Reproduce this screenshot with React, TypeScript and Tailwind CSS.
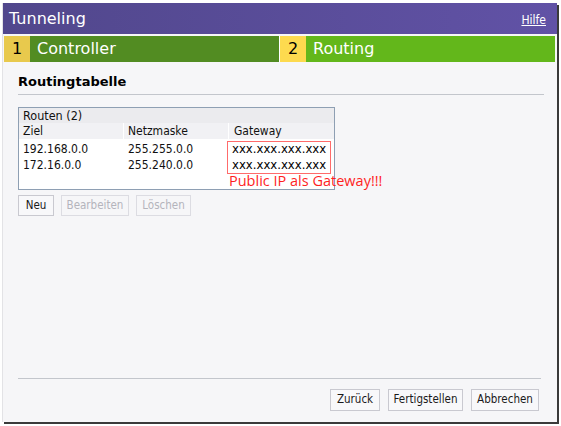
import React from 'react';

const routes = [
  { ziel: '192.168.0.0', maske: '255.255.0.0', gw: 'xxx.xxx.xxx.xxx' },
  { ziel: '172.16.0.0', maske: '255.240.0.0', gw: 'xxx.xxx.xxx.xxx' },
];

function Btn({ label, disabled, className = '' }: { label: string; disabled?: boolean; className?: string }) {
  return (
    <button
      className={`border px-[4px] text-[11.5px] leading-none ${
        disabled ? 'border-[#dcdce2] text-[#b4b4bc] bg-[#f6f6f8]' : 'border-[#c9c9d0] text-[#1a1a1a] bg-[#f8f8fa]'
      } ${className}`}
    >
      {label}
    </button>
  );
}

export default function App() {
  return (
    <div
      className="w-[561px] h-[426px] bg-white pt-[3px] pl-[2px]"
      style={{ fontFamily: '"DejaVu Sans Condensed", Tahoma, "DejaVu Sans", sans-serif' }}
    >
      <div className="w-[555px] h-[419px] bg-[#f6f6f8] border-l border-[#e3e3e6] flex flex-col shadow-[2px_2px_0_#3a3a3a]">
        {/* title bar */}
        <div className="h-[31px] flex items-center justify-between px-[6px] bg-gradient-to-r from-[#51478c] to-[#6152a6] text-white">
          <span className="text-[16px]" style={{ fontFamily: '"DejaVu Sans", sans-serif' }}>Tunneling</span>
          <a className="text-[12px] underline mr-[5px] mt-[2px]">Hilfe</a>
        </div>
        {/* steps */}
        <div className="h-[26px] mt-[2px] flex mx-[1px] mr-[2px]">
          <div className="flex w-[275px]">
            <div className="w-[26px] bg-[#e8c94d] text-black text-[16px] flex items-center justify-center" style={{ fontFamily: '"DejaVu Sans", sans-serif' }}>1</div>
            <div className="flex-1 bg-[#528c22] text-white text-[16px] flex items-center pl-[7px]" style={{ fontFamily: '"DejaVu Sans", sans-serif' }}>Controller</div>
          </div>
          <div className="flex flex-1 border-l border-white">
            <div className="w-[26px] bg-[#fdda4f] text-black text-[16px] flex items-center justify-center" style={{ fontFamily: '"DejaVu Sans", sans-serif' }}>2</div>
            <div className="flex-1 bg-[#63b71b] text-white text-[16px] flex items-center pl-[7px]" style={{ fontFamily: '"DejaVu Sans", sans-serif' }}>Routing</div>
          </div>
        </div>

        {/* content */}
        <div className="flex-1 flex flex-col pl-[15px] pr-[13px]">
          <div className="mt-[12px] pb-[4px] border-b border-[#c3c6cc]">
            <h2 className="text-[13px] leading-[16px] font-bold text-black" style={{ fontFamily: '"DejaVu Sans", sans-serif' }}>Routingtabelle</h2>
          </div>

          <div className="mt-[12px] w-[317px] h-[83px] border border-[#8e9fb3] bg-white text-[12px] text-[#111]">
            <div className="h-[15px] bg-[#ebebee] pl-[4px] leading-[15px] text-[12.5px]">Routen (2)</div>
            <div className="grid grid-cols-[105px_105px_1fr] h-[16px] leading-[16px] bg-[#f1f1f4]">
              <div className="pl-[4px] border-r border-white">Ziel</div>
              <div className="pl-[4px] border-r border-white">Netzmaske</div>
              <div className="pl-[5px]">Gateway</div>
            </div>
            <div className="relative pt-[2px]">
              {routes.map((r) => (
                <div key={r.ziel} className="grid grid-cols-[105px_105px_1fr] h-[16px] leading-[16px]">
                  <div className="pl-[4px]">{r.ziel}</div>
                  <div className="pl-[4px]">{r.maske}</div>
                  <div className="pl-[3px] text-black text-[13px]">{r.gw}</div>
                </div>
              ))}
              <div className="absolute left-[208px] top-[2px] w-[104px] h-[33px] border border-[#ff6b6b]" />
              <div
                className="absolute left-[210px] top-[33px] text-[14.5px] leading-[18px] text-[#ff1f1f] whitespace-nowrap"
                style={{ fontFamily: '"Open Sans", sans-serif' }}
              >
                Public IP als Gateway!!!
              </div>
            </div>
          </div>

          <div className="mt-[5px] flex gap-[7px]">
            <Btn label="Neu" className="w-[36px] h-[21px]" />
            <Btn label="Bearbeiten" disabled className="w-[68px] h-[21px]" />
            <Btn label="Löschen" disabled className="w-[55px] h-[21px]" />
          </div>

          <div className="mt-auto mb-[10px] border-t border-[#c3c6cc] mr-[3px]" />
          <div className="flex justify-end gap-[8px] mb-[11px] mr-[5px]">
            <Btn label="Zurück" className="w-[50px] h-[22px]" />
            <Btn label="Fertigstellen" className="w-[75px] h-[22px]" />
            <Btn label="Abbrechen" className="w-[68px] h-[22px]" />
          </div>
        </div>
      </div>
    </div>
  );
}
